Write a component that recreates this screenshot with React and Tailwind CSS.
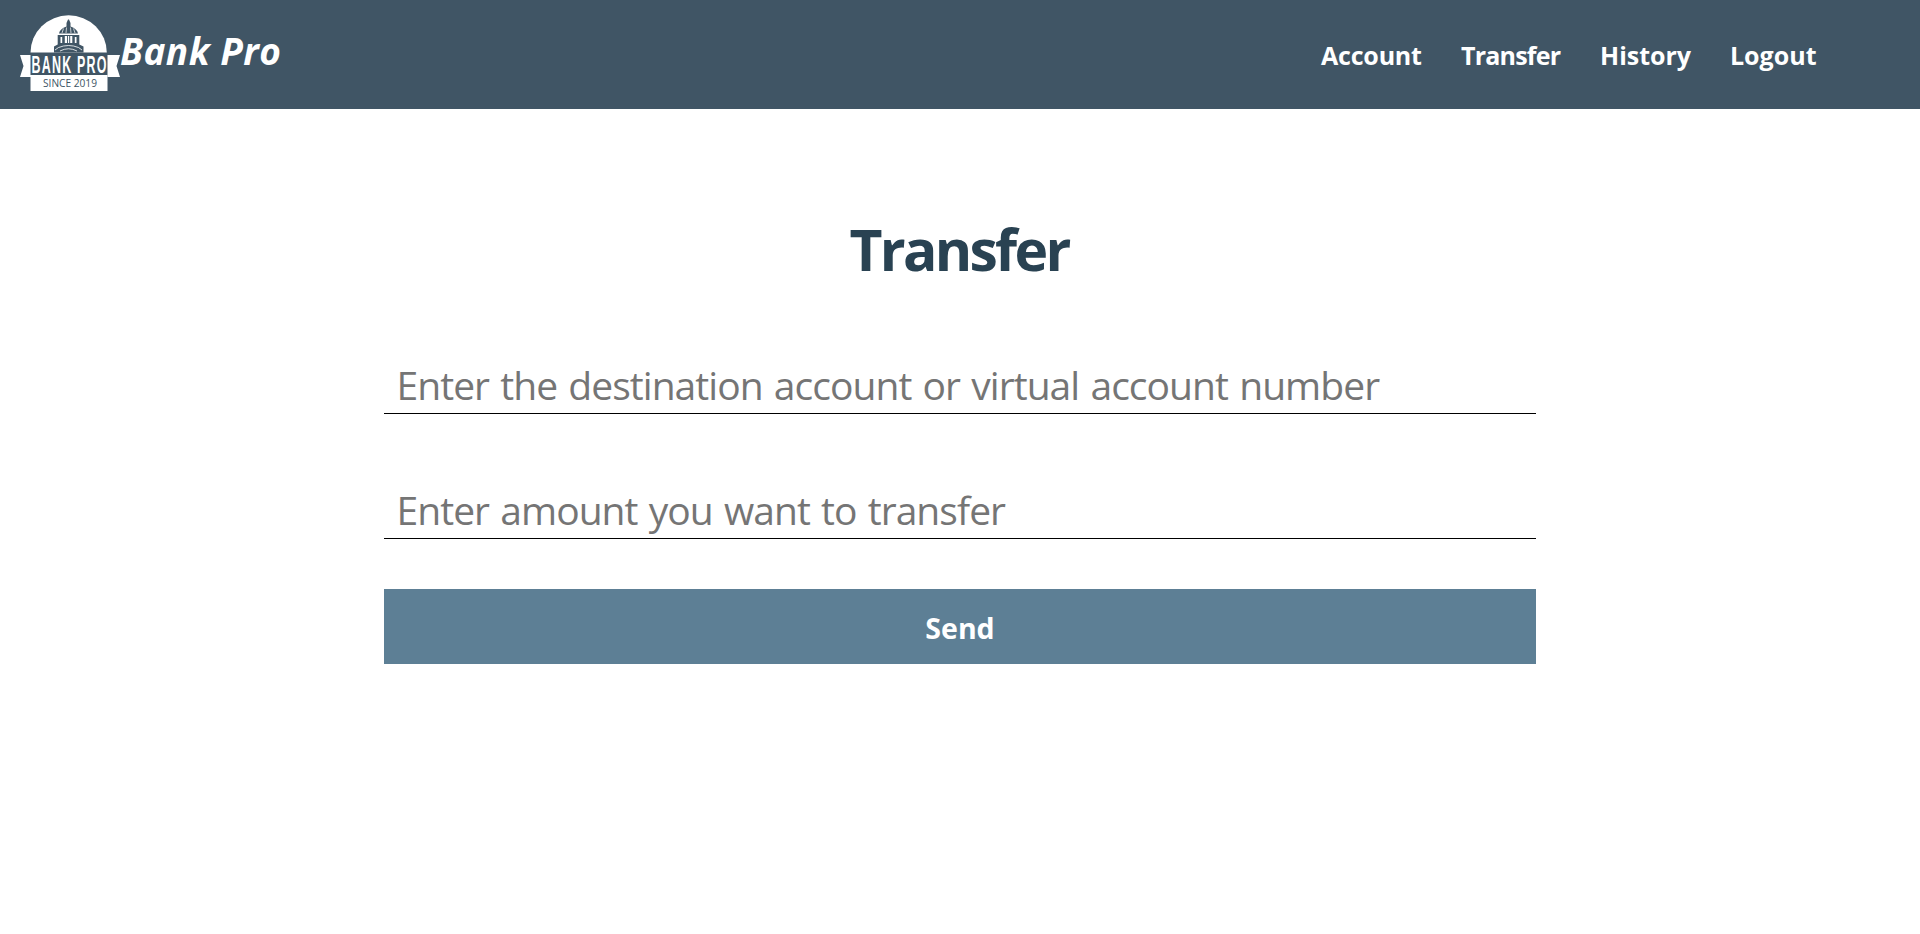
function Logo() {
  return (
    <svg className="block h-[77px] w-[100px] shrink-0 overflow-visible" viewBox="20 15 100 77" fill="#fff">
      <path d="M30.500 52.500A38.150 37.200 0 0 1 106.800 52.500Z" />
      <path d="M20 55H30.500V75H38V77H20L23.500 66ZM107.500 55H120L116.500 66L120 77H107.500Z" />
      <path d="M30.500 75H107.500V91H30.500Z" />
      <g fill="#405565">
        <path d="M68 19.500H69L70.500 23V26.500C75 28 77.500 30.500 78 33.500H59C59.500 30.500 62 28 66.500 26.500V23Z" />
        <path d="M57.700 35H79.300V44.500L83.500 46.500V52.500H54V46.500L57.700 44.500Z" />
      </g>
      <path d="M60.500 37H62.200V43H60.500ZM64.800 36H67V43H64.800ZM67.900 36H69.200V43H67.900ZM70.200 36H72.300V43H70.200ZM74.800 37H76.500V43H74.800Z" />
      <path d="M63.500 28.500L62 33M66.500 27.500L66 33M70.500 27.500L71 33M73.500 28.500L75 33" stroke="#fff" strokeWidth=".7" fill="none" />
      <path d="M55 50L58.500 47.500Q68.500 43.500 78.500 47.500L82 50M60 51Q68.500 46.500 77 51" stroke="#fff" strokeWidth=".8" fill="none" />
      <text transform="translate(31.500 73.300) scale(.53 1)" fontFamily="Liberation Sans" fontWeight="700" fontSize="23.500" letterSpacing="2.300">BANK PRO</text>
      <text x="43" y="86.500" fill="#405565" fontFamily="Open Sans" fontSize="10.500" textLength="54" lengthAdjust="spacingAndGlyphs">SINCE 2019</text>
    </svg>
  );
}

export default function App() {
  return (
    <div className="min-h-[934px] bg-white font-['Open_Sans',sans-serif]">
      <header className="flex h-[109px] bg-[#405565] pl-5 text-white">
        <div className="flex pt-[15px]">
          <Logo />
          <span className="mt-3 h-12 text-[37px] leading-[48px] font-bold tracking-[0.45px] whitespace-nowrap italic">Bank Pro</span>
        </div>
        <nav className="mr-[102px] ml-auto flex pt-9 text-[25px] leading-[38px] font-bold whitespace-nowrap">
          <a className="w-[140px] tracking-[-0.2px]">Account</a>
          <a className="w-[139px] tracking-[-0.8px]">Transfer</a>
          <a className="w-[130px]">History</a>
          <a className="w-[88px]">Logout</a>
        </nav>
      </header>
      <main className="mx-auto flex w-[1152px] flex-col">
        <h1 className="mt-[100px] h-[81px] pr-[2px] text-center text-[57px] leading-[80px] font-bold tracking-[-2.700px] text-[#294252]">Transfer</h1>
        <input className="mt-[62px] h-[62px] border-b border-black px-[12.500px] pt-[4px] text-[39px] tracking-[-0.950px] [word-spacing:2px] outline-none placeholder:text-[#757575]" placeholder="Enter the destination account or virtual account number" />
        <input className="mt-[63px] h-[62px] border-b border-black px-[12.500px] pt-[4px] text-[39px] tracking-[-0.950px] [word-spacing:2px] outline-none placeholder:text-[#757575]" placeholder="Enter amount you want to transfer" />
        <button className="mt-[50px] h-[75px] bg-[#5d7f95] pt-[3px] text-[28.500px] font-bold text-white">Send</button>
      </main>
    </div>
  );
}
